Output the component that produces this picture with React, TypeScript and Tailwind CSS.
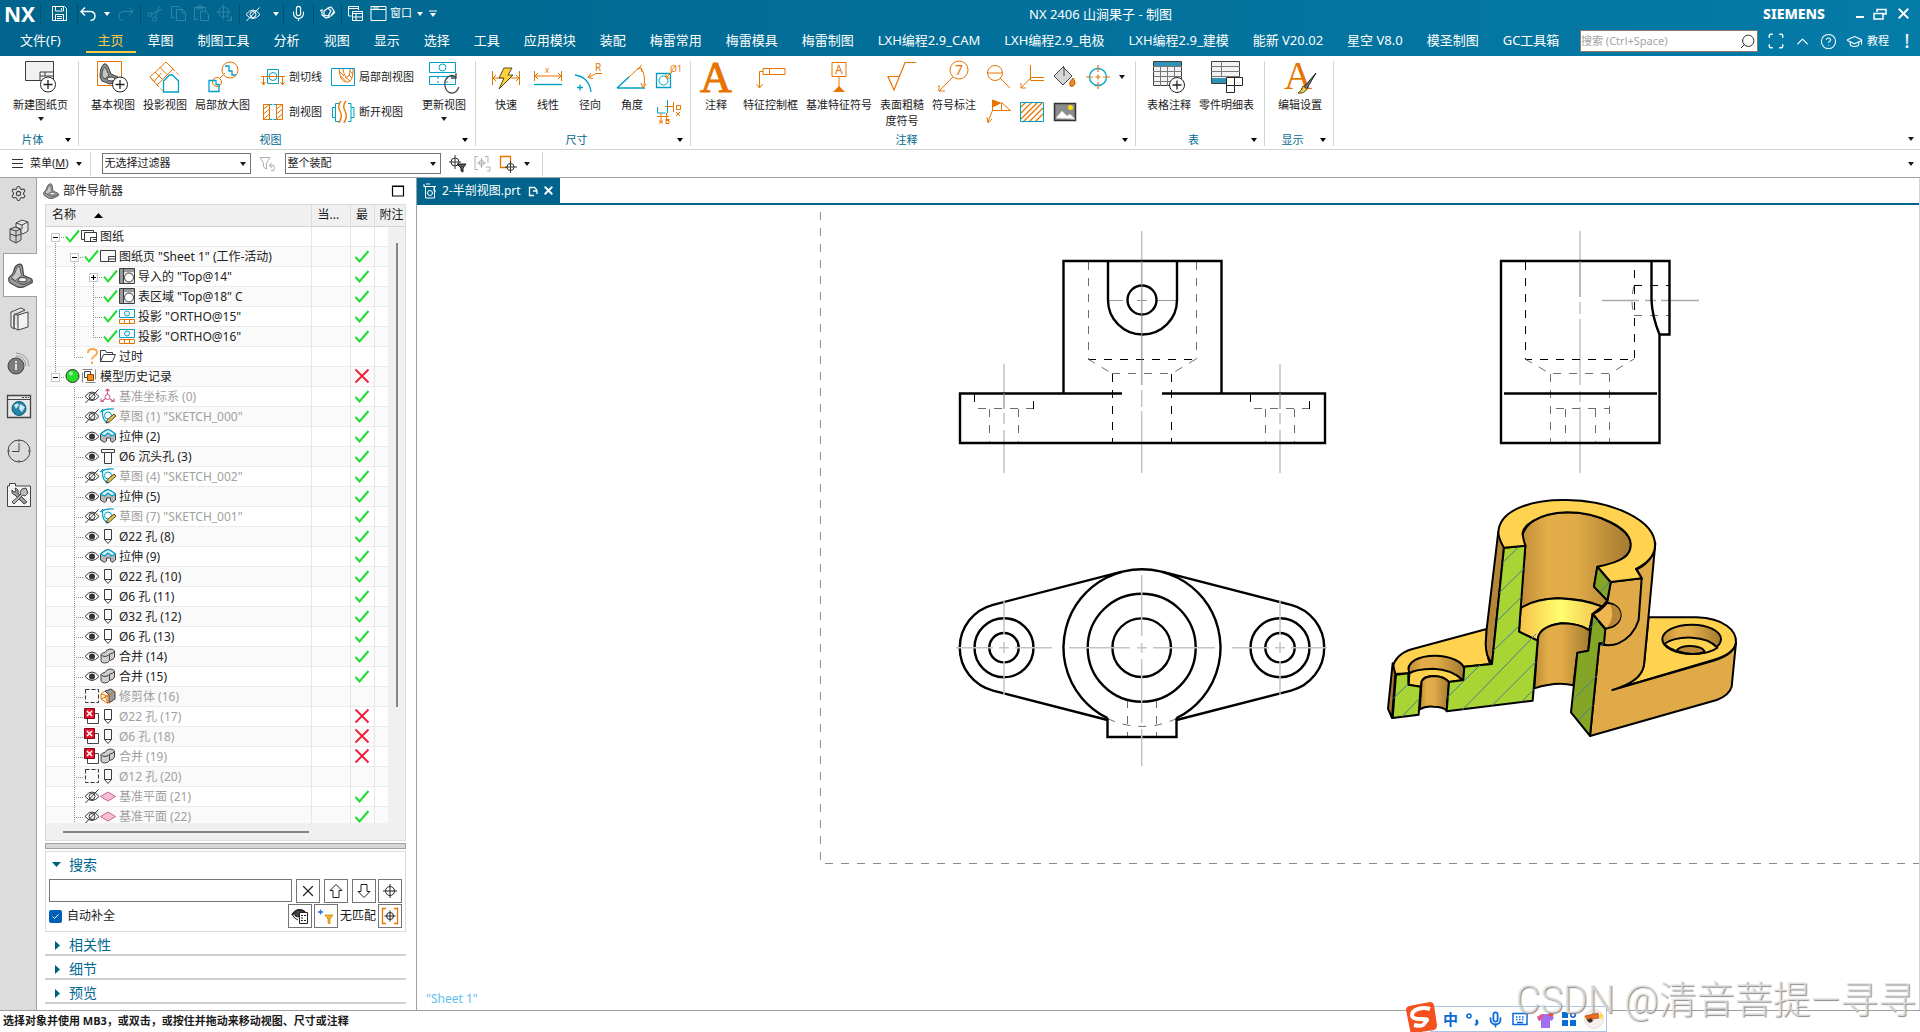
import type { ReactNode } from "react";
import { ChevronUp, CircleHelp, GraduationCap, Mic, Scan, Search, Settings, X } from "lucide-react";

const OR = "#e87400";
const CY = "#00a0c6";
const DK = "#3c3c3c";

function Icon({
  w = 32,
  h = w,
  children,
  className = "",
}: {
  w?: number;
  h?: number;
  children: ReactNode;
  className?: string;
}) {
  return (
    <svg
      width={w}
      height={h}
      viewBox={`0 0 ${w} ${h}`}
      fill="none"
      stroke="currentColor"
      className={`shrink-0 overflow-visible ${className}`}
      aria-hidden
    >
      {children}
    </svg>
  );
}

function Caret({ className = "" }: { className?: string }) {
  return (
    <svg width="6" height="4" viewBox="0 0 6 4" className={`shrink-0 ${className}`} aria-hidden>
      <path d="M0 0h6L3 4z" fill="currentColor" />
    </svg>
  );
}

/* ---------- タイトルバー ---------- */

function Sep() {
  return <span className="h-5 w-px shrink-0 bg-[#004f6e]" />;
}

function TitleBar() {
  return (
    <div className="flex h-[27px] items-center pl-1 pr-2">
      <span className="w-9 text-[21px] font-bold leading-6">NX</span>
      <Sep />
      <button className="ml-[10px] mr-[9px]" aria-label="保存">
        <Icon w={17}>
          <path d="M1.500 1.500h12l2 2v12h-14zM4.500 1.500v4.500h8v-4.500M4.500 15.500v-6h8v6M6 11.500h5M6 13.500h5M10.500 3v2" />
        </Icon>
      </button>
      <Sep />
      <button className="ml-[2px] mr-2" aria-label="撤销">
        <Icon w={16}>
          <path d="M5 1.500L1 5.500l4 4M1 5.500h9q5 0 5 4.500t-4.500 4.500" strokeWidth="1.400" />
        </Icon>
      </button>
      <Caret />
      <button className="ml-2 mr-[6px] text-[#2f86a6]" aria-label="重做">
        <Icon w={16}>
          <path d="M11 1.500l4 4-4 4M15 5.500H6q-5 0-5 4.500t4.500 4.500" />
        </Icon>
      </button>
      <Sep />
      <div className="mx-[6px] flex items-center gap-[6px] text-[#2f86a6]">
        <button aria-label="剪切">
          <Icon w={17}>
            <path d="M15.500 4L5 8.500M12.500 1L8 12" />
            <circle cx="3" cy="9.500" r="2" />
            <circle cx="7.500" cy="14" r="2" />
          </Icon>
        </button>
        <button aria-label="复制">
          <Icon w={17}>
            <path d="M5 12.500H1.500v-11h7l2 2M6.500 4.500h6l3 3v8h-9zM12 4.500v3.500h3.500" />
          </Icon>
        </button>
        <button aria-label="粘贴">
          <Icon w={17}>
            <path d="M5 14.500H1.500v-12h11V6M4.500 1h5v3h-5zM7.500 6.500h5l3 3v6h-8z" />
          </Icon>
        </button>
        <button aria-label="移动">
          <Icon w={17}>
            <circle cx="7.500" cy="7" r="5" />
            <path d="M7.500 0v14M.5 7h14M10 10l5.500 5.500M15.500 11v4.500H11" />
          </Icon>
        </button>
      </div>
      <Sep />
      <button className="ml-[5px] mr-3" aria-label="隐藏">
        <EyeOff />
      </button>
      <Caret />
      <span className="w-1" />
      <Sep />
      <button className="mx-[6px]" aria-label="语音">
        <Mic size={17} strokeWidth={1.6} />
      </button>
      <Sep />
      <button className="mx-[5px]" aria-label="触控">
        <Icon w={17}>
          <path d="M5 6l4-3 3 3-3 5-4-1zM9 3l3-1 3 4-3 5H9M1 6l2-1v5l4 3 4-1M13 10l3-3" strokeWidth="1.200" />
        </Icon>
      </button>
      <Sep />
      <button className="ml-[5px]" aria-label="层叠窗口">
        <Icon w={17}>
          <path d="M4.500 11H1.500V1.500h10V5M1.500 3.500h10M5.500 6.500h10v9h-10zM5.500 8.500h10M9 8.500v7M5.500 12h10" />
        </Icon>
      </button>
      <button className="ml-[6px] flex items-center gap-[3px] text-[11px]">
        <Icon w={17}>
          <path d="M1 1.500h15v14H1zM1 4.500h15M3 3h6" />
        </Icon>
        窗口
        <Caret className="ml-[2px]" />
      </button>
      <Icon w={8} className="ml-[6px]">
        <path d="M0 1h8" />
        <path d="M1 3h6L4 7z" fill="currentColor" stroke="none" />
      </Icon>
      <div className="flex-1 pl-[152px] text-center text-[13px] leading-5">NX 2406 山涧果子 - 制图</div>
      <div className="flex w-[300px] items-center justify-end">
        <span className="mr-[31px] text-sm font-extrabold leading-4">SIEMENS</span>
        <button className="mr-[9px]" aria-label="最小化">
          <Icon w={8}>
            <path d="M0 7h8" strokeWidth="2" />
          </Icon>
        </button>
        <button className="mr-2" aria-label="还原">
          <Icon w={14} h={12}>
            <path d="M4 4V1.500h9V6h-3M1 5.500h9V11H1z" strokeWidth="1.500" />
          </Icon>
        </button>
        <button aria-label="关闭">
          <X size={17} strokeWidth={2.5} />
        </button>
      </div>
    </div>
  );
}

const MENU = [
  "主页", "草图", "制图工具", "分析", "视图", "显示", "选择", "工具", "应用模块", "装配",
  "梅雷常用", "梅雷模具", "梅雷制图", "LXH编程2.9_CAM", "LXH编程2.9_电极", "LXH编程2.9_建模",
  "能新 V20.02", "星空 V8.0", "模圣制图", "GC工具箱",
];

function MenuBar() {
  return (
    <div className="flex h-[29px] items-start">
      <nav className="flex pl-2 text-[13px] leading-[26px]">
        <button className="mr-[13px] h-[26px] px-3">文件(F)</button>
        {MENU.map((m) => (
          <button
            key={m}
            className={
              m === "主页"
                ? "h-[26px] border-b-2 border-[#ffc845] px-3 leading-[26px] text-[#ffc845]"
                : "h-[26px] whitespace-nowrap px-3"
            }
          >
            {m}
          </button>
        ))}
      </nav>
      <div className="ml-auto flex items-center pr-[9px] pt-[3px]">
        <label className="flex h-[22px] w-[178px] items-center border border-[#8a7a6c] bg-white">
          <input
            aria-label="搜索命令"
            placeholder="搜索 (Ctrl+Space)"
            className="w-0 flex-1 text-[11px] text-black outline-none placeholder:text-[#a4a4a4]"
          />
          <Search size={17} strokeWidth={1.4} className="mr-[1px] -scale-x-100 text-[#333]" />
        </label>
        <button className="ml-[9px]" aria-label="全屏">
          <Scan size={18} strokeWidth={1.8} />
        </button>
        <button className="ml-2" aria-label="折叠">
          <ChevronUp size={19} strokeWidth={1.6} />
        </button>
        <button className="ml-2" aria-label="帮助">
          <CircleHelp size={17} strokeWidth={1.5} />
        </button>
        <button className="ml-[9px] flex items-center gap-1 text-[11px]">
          <GraduationCap size={17} strokeWidth={1.5} />
          教程
        </button>
        <span className="ml-[14px] w-2 text-center text-xl leading-5">!</span>
      </div>
    </div>
  );
}

/* ---------- リボン ---------- */

function Big({ label, sub, caret, children }: { label: string; sub?: string; caret?: boolean; children: ReactNode }) {
  return (
    <button className="flex flex-col items-center whitespace-nowrap text-[11px] leading-4">
      {children}
      <span className="mt-1">{label}</span>
      {sub && <span>{sub}</span>}
      {caret && <Caret className="mt-1" />}
    </button>
  );
}

function Small({ label, aria, children }: { label?: string; aria?: string; children: ReactNode }) {
  return (
    <button className="flex h-6 items-center gap-1 whitespace-nowrap text-[11px]" aria-label={aria}>
      {children}
      {label}
    </button>
  );
}

function Group({ name, className = "", children }: { name: string; className?: string; children: ReactNode }) {
  return (
    <section className="mb-[3px] mt-[5px] flex flex-col border-r border-[#d4d4d4]">
      <div className={`flex flex-1 gap-2 ${className}`}>{children}</div>
      <div className="flex items-center pr-[7px] text-[11px] leading-3 text-[#00688f]">
        <span className="flex-1 text-center">{name}</span>
        <Caret className="text-black" />
      </div>
    </section>
  );
}

function Column({ children }: { children: ReactNode }) {
  return <div className="flex flex-col gap-[11px] pt-1">{children}</div>;
}

function Bracket({ s = 24 }: { s?: number }) {
  return (
    <svg width={s} height={s} viewBox="0 0 24 24" className="shrink-0" aria-hidden>
      <path d="M1 14Q5 11 6 6 7 2 11 1q3 0 3 4l1 7 7 3q2 1 1 4l-8 4q-3 1-6 0l-7-4q-2-2-1-5z" fill="#9b9b9b" stroke="#4a4a4a" strokeWidth="1.200" />
      <path d="M3 14q4-3 5-8 1-3 3-3l2 9-6 5z" fill="#c9c9c9" stroke="#4a4a4a" strokeWidth=".8" />
      <path d="M3 15l9 5q3 1 5 0l6-3" fill="none" stroke="#5a5a5a" />
      <ellipse cx="14" cy="16" rx="4" ry="2" fill="#efefef" stroke="#4a4a4a" />
    </svg>
  );
}

function PlusBadge({ x, y }: { x: number; y: number }) {
  return (
    <g stroke="#222">
      <circle cx={x} cy={y} r="7.500" fill="#fff" />
      <path d={`M${x - 4.5} ${y}h9M${x} ${y - 4.5}v9`} strokeWidth="1.300" />
    </g>
  );
}

function Ribbon() {
  return (
    <div className="flex h-[94px] border-b border-[#d4d4d4]">
      <Group name="片体" className="pl-[13px] pr-[10px]">
        <Big label="新建图纸页" caret>
          <Icon>
            <path d="M.5.5h28v19H.5z" fill="#f1f1f1" stroke={DK} />
            <path d="M15 11h13M15 11v8M15 15h13M20 11v4" stroke={DK} />
            <PlusBadge x={23} y={23.5} />
          </Icon>
        </Big>
      </Group>
      <Group name="视图" className="pl-3 pr-[9px]">
        <Big label="基本视图">
          <Icon w={34} h={32}>
            <path d="M1.500.5h24v24h-24z" stroke={OR} />
            <path d="M4 16Q4 6 8 3q3-1 5 5l2 5 7 3q2 2 0 5l-8 2-8-3z" fill="#8c8c8c" stroke="#3d3d3d" />
            <path d="M6 15q0-7 3-9l4 8-4 4z" fill="#c4c4c4" stroke="#555" />
            <ellipse cx="15" cy="18" rx="4" ry="2" fill="#eee" stroke="#3d3d3d" />
            <PlusBadge x={24} y={23.5} />
          </Icon>
        </Big>
        <Big label="投影视图">
          <Icon>
            <path d="M1 16L17 1l7 7L8 24zM6 11l7 7M11 6.500l7 7M4.500 20l-3.500-4M12 12L5 21" stroke={OR} />
            <path d="M24 8l6 6M8 24l6 6" stroke={OR} strokeDasharray="3 2" />
            <path d="M14.500 20l6-6h3l6 6v11h-15z" fill="#fff" stroke={CY} strokeWidth="1.300" />
          </Icon>
        </Big>
        <Big label="局部放大图">
          <Icon>
            <circle cx="23" cy="9" r="8" stroke={OR} />
            <circle cx="10" cy="21" r="4.500" stroke={OR} />
            <path d="M13 17l5-5" stroke={OR} />
            <path d="M18 5h4v5h3v4h4M2 19.500h7v4h3v7H2z" stroke={CY} strokeWidth="1.300" />
          </Icon>
        </Big>
        <div className="flex gap-[9px] pl-[3px]">
          <Column>
            <Small label="剖切线">
              <Icon w={24}>
                <path d="M6.500 4.500h11v14h-11z" stroke={CY} />
                <circle cx="12" cy="11.500" r="4" stroke={CY} />
                <path d="M0 11.500h24M2.500 11.500v8M.5 17l2 3 2-3M21.500 11.500v8M19.500 17l2 3 2-3" stroke={OR} />
              </Icon>
            </Small>
            <Small label="剖视图">
              <Icon w={24}>
                <path d="M2.500 4.500h6v15h-6zM15.500 4.500h6v15h-6zM2.500 9l6-4.500M2.500 14l6-5M2.500 19l6-5M15.500 9l6-4.500M15.500 14l6-5M15.500 19l6-5" stroke={OR} />
                <path d="M8.500 4.500h7M8.500 19.500h7" stroke={CY} strokeDasharray="3 1" />
              </Icon>
            </Small>
          </Column>
          <Column>
            <Small label="局部剖视图">
              <Icon w={24}>
                <path d="M.5 3.500h23v17H.5z" stroke={CY} />
                <path d="M8 4c1 9 3 13 8 13s6-6 6-13M12 4q1 8 4 8t3-8M9 7l4 4M9.500 11l5 5M14 12l5 4M18 10l3 3M19 6l3 3" stroke={OR} />
              </Icon>
            </Small>
            <Small label="断开视图">
              <Icon w={24}>
                <path d="M8 3.500H4.500v18H8M4.500 7.500h-3v10h3M17 3.500h3v18h-3M20 7.500h3v10h-3" stroke={CY} />
                <path d="M10 1q-4 5-1 10t-1 12M15 1q-4 5-1 10t-1 12" stroke={OR} strokeWidth="1.300" />
              </Icon>
            </Small>
          </Column>
        </div>
        <Big label="更新视图" caret>
          <Icon>
            <path d="M1.500 1.500h26v10h-26zM1.500 15.500h26v8h-26z" stroke={CY} />
            <circle cx="14.500" cy="6.500" r="3.500" stroke={CY} />
            <path d="M10 16v8M19 16v8" stroke={CY} strokeDasharray="2 2" />
            <path d="M28 16q-4-3-8 0t-3 9 6 7 8-6" stroke="#444" strokeWidth="1.300" />
            <path d="M28 12v5h-5" stroke="#444" strokeWidth="1.300" />
          </Icon>
        </Big>
      </Group>
      <Group name="尺寸" className="pl-[14px] pr-2">
        <div className="flex gap-[10px]">
          <Big label="快速">
            <Icon>
              <path d="M2.500 10v14M29.500 10v14M3 17h26M6 14l-3 3 3 3M26 14l3 3-3 3" stroke={OR} />
              <path d="M14 7h8l-4 7h5L9 28l5-11H9z" fill="#ffd23c" stroke="#5a4a1a" />
            </Icon>
          </Big>
          <Big label="线性">
            <Icon>
              <path d="M2.500 10v10M29.500 10v10M3 15h26M6 12l-3 3 3 3M26 12l3 3-3 3" stroke={OR} />
              <path d="M2 23.500h28" stroke={CY} strokeWidth="1.400" />
              <text x="13" y="12" fontSize="8" fill={OR} stroke="none">x</text>
            </Icon>
          </Big>
          <Big label="径向">
            <Icon>
              <path d="M1 14q14 2 16 17M3 26.500h6M6 23.500v6" stroke={CY} strokeWidth="1.300" />
              <path d="M28 12.500h-6l-8 4M17 12l-3 4.500 5 1" stroke={OR} />
              <text x="21" y="10" fontSize="10" fill={OR} stroke="none">R</text>
            </Icon>
          </Big>
          <Big label="角度">
            <Icon>
              <path d="M1 27h28M1 27l12-11" stroke={CY} strokeWidth="1.500" />
              <path d="M13 16L26 4M25 7q5 8 3 18M21 8l4-1 1 4M25 22l2 5 3-4" stroke={OR} />
            </Icon>
          </Big>
        </div>
        <Column>
          <Small aria="孔尺寸">
            <Icon w={26} h={24}>
              <path d="M.5 8.500h14v14H.500z" stroke={CY} strokeWidth="1.300" />
              <circle cx="7.500" cy="15.500" r="4.500" stroke={CY} />
              <path d="M10 13l6-6M10 9v4h4" stroke={OR} />
              <text x="14" y="7" fontSize="9" fill={OR} stroke="none">Ø1</text>
            </Icon>
          </Small>
          <Small aria="坐标尺寸">
            <Icon w={26} h={24}>
              <path d="M1.500 7v6M1.500 13h8M11.500 0v13" stroke={CY} />
              <path d="M9 6.500h9M17.500 2v10M1 16.500h12M5 13v8M10.500 13v8M20.500 5.500h4v4h-4zM13.500 19.500h-4" stroke={OR} />
              <path d="M3 20.500l4 3M7 20.500l-4 3M20 12l4 4M24 12l-4 4M10 20.500h3v3h-3z" stroke={OR} />
            </Icon>
          </Small>
        </Column>
      </Group>
      <Group name="注释" className="pl-[9px] pr-[10px]">
        <div className="flex pr-[3px]">
          <Big label="注释">
            <svg width="32" height="32" viewBox="0 0 32 32" className="overflow-visible" aria-hidden>
              <text x="16" y="31" textAnchor="middle" fontSize="44" fill={OR} stroke={OR} className="font-['Liberation_Serif',serif]">A</text>
            </svg>
          </Big>
        </div>
        <Big label="特征控制框">
          <Icon>
            <path d="M8 7.500h22v6H8zM14.500 7.500v6M8 10.500H4.500v16M1.500 23l3 4 3-4" stroke={OR} />
          </Icon>
        </Big>
        <Big label="基准特征符号">
          <Icon>
            <path d="M9 1.500h14v14H9zM16 16v10" stroke={OR} />
            <path d="M16 25l6 6H10z" fill={OR} stroke="none" />
            <text x="12" y="13" fontSize="12" fill={OR} stroke="none">A</text>
          </Icon>
        </Big>
        <Big label="表面粗糙" sub="度符号">
          <Icon>
            <path d="M30 1.500H19L8 29 2 15.500h11" stroke={OR} strokeWidth="1.200" />
          </Icon>
        </Big>
        <Big label="符号标注">
          <Icon>
            <circle cx="21" cy="9" r="9" stroke={OR} />
            <path d="M15 16L1 30M1 24v6h6" stroke={OR} />
            <text x="17" y="14" fontSize="14" fill={OR} stroke="none">7</text>
          </Icon>
        </Big>
        <div className="flex gap-[9px] pl-[3px]">
          <Column>
            <Small aria="目标点">
              <Icon w={24}>
                <circle cx="8" cy="8" r="7.500" stroke={OR} />
                <path d="M.5 8h15M13 13l10 10" stroke={OR} />
              </Icon>
            </Small>
            <Small aria="焊接符号">
              <Icon w={24}>
                <path d="M5.500 0v10.500L1 22M0 17l1 6 4-4M5.500 10.500h18l-9-8v8" stroke={OR} />
                <path d="M5.500 0l8 3-8 4z" fill={OR} stroke={OR} />
              </Icon>
            </Small>
          </Column>
          <Column>
            <Small aria="相交符号">
              <Icon w={24}>
                <path d="M10.500 0v15.500H24M24 12.500H11L1 23M1 18v5h5" stroke={OR} />
              </Icon>
            </Small>
            <Small aria="剖面线">
              <Icon w={24}>
                <path d="M1 7l5-5M1 13L12 2M1 19L18 2M3 22L22 3M9 22L23 8M15 22l8-8" stroke={OR} strokeWidth="1.300" />
                <path d="M.5 2.500h23v19H.5z" stroke={CY} />
              </Icon>
            </Small>
          </Column>
          <Column>
            <Small aria="区域填充">
              <Icon w={24}>
                <path d="M10 2l9 9-9 9-9-9z" fill="#d6d6d6" stroke="#444" />
                <path d="M7 5l4-4M11 2v9" stroke="#444" />
                <path d="M20 13q4 6 0 8t-3-4z" fill="#f28a1c" stroke="#b35c00" />
              </Icon>
            </Small>
            <Small aria="图像">
              <Icon w={24}>
                <path d="M1.500 3.500h21v17h-21z" fill="#8b8b8b" stroke="#333" strokeWidth="1.500" />
                <circle cx="17.500" cy="7.500" r="2.500" fill="#ffe100" stroke="none" />
                <path d="M3 18l6-7 5 5 3-2 5 5z" fill="#fff" stroke="#ccc" />
              </Icon>
            </Small>
          </Column>
          <Column>
            <Small aria="中心标记">
              <Icon w={24}>
                <circle cx="12" cy="12" r="8.500" stroke={CY} strokeWidth="1.300" />
                <path d="M12 0v7M12 17v7M0 12h7M17 12h7M9.500 12h5M12 9.500v5" stroke={OR} strokeWidth="1.200" />
              </Icon>
            </Small>
          </Column>
          <Caret className="mt-[14px]" />
        </div>
      </Group>
      <Group name="表" className="pl-[11px] pr-[10px]">
        <Big label="表格注释">
          <Icon>
            <path d="M.5.5h28v24H.5z" fill="#f2f2f2" stroke={DK} />
            <path d="M1 1h27v4H1z" fill="#2e93b5" stroke="none" />
            <path d="M0 5.500h29M0 10.500h29M0 15.500h29M0 20.500h29M7.500 5v20M14.500 5v20M21.500 5v20" stroke="#777" />
            <PlusBadge x={24} y={24} />
          </Icon>
        </Big>
        <Big label="零件明细表">
          <Icon>
            <path d="M.5.5h28v22H.5z" fill="#f2f2f2" stroke={DK} />
            <path d="M1 17h27v5H1z" fill="#2e93b5" stroke="none" />
            <path d="M0 5.500h29M0 10.500h29M0 15.500h29M10.500 0v15" stroke="#777" />
            <path d="M15.500 16.500h16v8h-8v7h-8zM23.500 16v8M15.500 24.500h8" fill="#fff" stroke="#222" />
          </Icon>
        </Big>
      </Group>
      <Group name="显示" className="pl-[13px] pr-[11px]">
        <Big label="编辑设置">
          <svg width="34" height="32" viewBox="0 0 34 32" className="overflow-visible" aria-hidden>
            <text x="15" y="28" textAnchor="middle" fontSize="39" fill={OR} className="font-['Liberation_Serif',serif]">A</text>
            <path d="M33 12L20 27l3 2z" fill="#777" stroke="#222" />
            <path d="M20 25l4 3q-3 5-9 4 4-2 5-7z" fill="#f1cf4b" stroke="#5a4a1a" />
          </svg>
        </Big>
      </Group>
      <Caret className="mb-2 ml-auto mr-[6px] self-end" />
    </div>
  );
}

/* ---------- 選択バー ---------- */

function Combo({ label, value, className }: { label: string; value: string; className: string }) {
  return (
    <div className={`relative h-[21px] ${className}`}>
      <select aria-label={label} className="h-full w-full appearance-none border border-[#757575] bg-white pl-[2px] text-[11px] outline-none">
        <option>{value}</option>
      </select>
      <Caret className="pointer-events-none absolute right-1 top-[9px] w-2" />
    </div>
  );
}

function SelectionBar() {
  return (
    <div className="flex h-7 items-center border-b border-[#a0a0a0] pr-[6px] text-[11px]">
      <button className="ml-3 flex items-center gap-[7px]">
        <Icon w={11}>
          <path d="M0 1.500h11M0 5.500h11M0 9.500h11" stroke="#333" />
        </Icon>
        <span>
          菜单(<u>M</u>)
        </span>
        <Caret />
      </button>
      <span className="ml-2 mr-[11px] h-6 w-px bg-[#d4d4d4]" />
      <Combo label="选择过滤器" value="无选择过滤器" className="w-[149px]" />
      <button className="ml-2 mr-2 text-[#b0b0b0]" aria-label="重置过滤器">
        <Icon w={18}>
          <path d="M1 2.500h10L7.500 8v6l-3-2V8zM11 10.500h4v5h-3M13 8l-3 2.500 3 2.500" />
        </Icon>
      </button>
      <Combo label="选择范围" value="整个装配" className="w-[156px]" />
      <div className="ml-2 flex items-center gap-[7px]">
        <button aria-label="捕捉过滤">
          <Icon w={18}>
            <circle cx="6" cy="7" r="4" stroke="#333" />
            <path d="M6 0v14M0 7h12" stroke="#333" />
            <path d="M8 9h9l-3 4v4l-2-1v-3z" fill="#555" stroke="#222" />
          </Icon>
        </button>
        <button className="text-[#b0b0b0]" aria-label="重置捕捉">
          <Icon w={18}>
            <path d="M4 1.500H1v13h3M11 1.500h3V8M7.500 3v10M3 8h9M12 12h4v4h-3" />
            <circle cx="7.500" cy="8" r="2.500" />
          </Icon>
        </button>
        <button aria-label="框选">
          <Icon w={18}>
            <path d="M1.500 1.500h10v11h-10z" stroke={OR} strokeWidth="1.300" />
            <circle cx="11.500" cy="12" r="3.500" fill="#fff" stroke="#333" />
            <path d="M11.500 6v12M6 12h12" stroke="#333" />
          </Icon>
        </button>
        <Caret />
      </div>
      <span className="ml-3 h-6 w-px bg-[#d4d4d4]" />
      <Caret className="ml-auto" />
    </div>
  );
}

/* ---------- リソースバー ---------- */

function Rail() {
  const item = "flex h-11 w-full items-center justify-center pl-[2px]";
  return (
    <nav className="flex w-[37px] shrink-0 flex-col border-r border-[#a0a0a0] bg-[#dcdcdc] text-[#444]">
      <button className="flex h-[31px] items-center justify-center" aria-label="设置">
        <Settings size={17} strokeWidth={1.5} />
      </button>
      <button className={item} aria-label="装配导航器">
        <Icon w={20} h={24}>
          <path d="M1 10l5-2 6 2v11l-5 3-6-3z" fill="#cfcfcf" />
          <path d="M7 4l6-3 6 2v9l-5 3-2-1v-4L7 8z" fill="#e4e4e4" />
          <path d="M1 10l6 2 5-2M7 12v12M1 15l6 2 5-2M7 4l6 2 6-3M13 6v4" />
        </Icon>
      </button>
      <button
        className="-mr-px ml-[3px] flex h-11 items-center justify-center self-stretch border border-r-0 border-[#a0a0a0] bg-white"
        aria-label="部件导航器"
      >
        <Bracket s={25} />
      </button>
      <button className={item} aria-label="重用库">
        <Icon w={20} h={24}>
          <path d="M2 5l10-4 4 2M2 5v15l3 2V8M5 8l11-5M9 23V8l10-3v15l-10 3zM5 8v13l4 2M5 7l4 1" fill="#f2f2f2" />
        </Icon>
      </button>
      <button className={item} aria-label="信息">
        <Icon w={24}>
          <circle cx="9" cy="15" r="8" fill="#7b7b7b" />
          <path d="M9 13v6M9 10v2" stroke="#fff" strokeWidth="1.500" />
          <path d="M9 5q9 0 10 10M9 2q12 1 13 13" stroke="#999" />
        </Icon>
      </button>
      <button className={item} aria-label="浏览器">
        <Icon w={24}>
          <path d="M.5.5h23v22H.5z" fill="#e8e8e8" strokeWidth="1.300" />
          <path d="M1 4.500h22M15 2.500h2M18 2.500h2M21 2.500h1" />
          <circle cx="12" cy="13.500" r="7" fill="#2485a8" stroke="#135d78" />
          <path d="M7 10q4-3 5 0l-3 4zM13 9l5 3-3 5-3-3zM9 17l3 2" fill="#cfe9f2" stroke="none" />
        </Icon>
      </button>
      <button className={item} aria-label="历史记录">
        <Icon w={24}>
          <circle cx="12" cy="12" r="11" />
          <path d="M12 4v8.500H5M12 1v2M12 21v2M1 12h2M21 12h2" />
        </Icon>
      </button>
      <button className={item} aria-label="工具">
        <Icon w={24}>
          <path d="M.5 3h2V.5h6V3h15v20.500H.5z" fill="#f4f4f4" />
          <path d="M5 7q-1 4 3 5l9 9 3-2-9-9q1-4-3-5l1 3-2 1z" fill="#999" />
          <path d="M19 5l-4 1-2 3 1 2-9 8 2 2 9-9 2 1 3-3z" fill="#bbb" />
        </Icon>
      </button>
    </nav>
  );
}

/* ---------- 部件ナビゲータ ---------- */

function EyeOff() {
  return (
    <Icon w={16}>
      <path d="M1 8.500q7-9 14 0q-7 8-14 0z" />
      <circle cx="8" cy="8.500" r="3" />
      <path d="M1.500 15L14.500 1.500" />
    </Icon>
  );
}

type Mark = "ok" | "bad" | "none";
type Status = "check" | "ask" | "dot" | "off" | "on" | "dash" | "err";
type Kind =
  | "sheets" | "sheet" | "view" | "ortho" | "folder" | "model" | "csys"
  | "sketch" | "extrude" | "cbore" | "hole" | "unite" | "trim" | "plane";

interface Row {
  // 各階層の罫線: "|"=続く, " "=なし, "+"/"-"=展開ボタン, "t"=枝, "L"=末端
  tree: string;
  status: Status;
  kind: Kind;
  label: string;
  mark: Mark;
  dim?: boolean;
}

const ROWS: Row[] = [
  { tree: "-", status: "check", kind: "sheets", label: "图纸", mark: "none" },
  { tree: "|-", status: "check", kind: "sheet", label: '图纸页 "Sheet 1" (工作-活动)', mark: "ok" },
  { tree: "||+", status: "check", kind: "view", label: '导入的 "Top@14"', mark: "ok" },
  { tree: "||t", status: "check", kind: "view", label: '表区域 "Top@18" C', mark: "ok" },
  { tree: "||t", status: "check", kind: "ortho", label: '投影 "ORTHO@15"', mark: "ok" },
  { tree: "||L", status: "check", kind: "ortho", label: '投影 "ORTHO@16"', mark: "ok" },
  { tree: "|L", status: "ask", kind: "folder", label: "过时", mark: "none" },
  { tree: "_", status: "dot", kind: "model", label: "模型历史记录", mark: "bad" },
  { tree: " t", status: "off", kind: "csys", label: "基准坐标系 (0)", mark: "ok", dim: true },
  { tree: " t", status: "off", kind: "sketch", label: '草图 (1) "SKETCH_000"', mark: "ok", dim: true },
  { tree: " t", status: "on", kind: "extrude", label: "拉伸 (2)", mark: "ok" },
  { tree: " t", status: "on", kind: "cbore", label: "Ø6 沉头孔 (3)", mark: "ok" },
  { tree: " t", status: "off", kind: "sketch", label: '草图 (4) "SKETCH_002"', mark: "ok", dim: true },
  { tree: " t", status: "on", kind: "extrude", label: "拉伸 (5)", mark: "ok" },
  { tree: " t", status: "off", kind: "sketch", label: '草图 (7) "SKETCH_001"', mark: "ok", dim: true },
  { tree: " t", status: "on", kind: "hole", label: "Ø22 孔 (8)", mark: "ok" },
  { tree: " t", status: "on", kind: "extrude", label: "拉伸 (9)", mark: "ok" },
  { tree: " t", status: "on", kind: "hole", label: "Ø22 孔 (10)", mark: "ok" },
  { tree: " t", status: "on", kind: "hole", label: "Ø6 孔 (11)", mark: "ok" },
  { tree: " t", status: "on", kind: "hole", label: "Ø32 孔 (12)", mark: "ok" },
  { tree: " t", status: "on", kind: "hole", label: "Ø6 孔 (13)", mark: "ok" },
  { tree: " t", status: "on", kind: "unite", label: "合并 (14)", mark: "ok" },
  { tree: " t", status: "on", kind: "unite", label: "合并 (15)", mark: "ok" },
  { tree: " t", status: "dash", kind: "trim", label: "修剪体 (16)", mark: "none", dim: true },
  { tree: " t", status: "err", kind: "hole", label: "Ø22 孔 (17)", mark: "bad", dim: true },
  { tree: " t", status: "err", kind: "hole", label: "Ø6 孔 (18)", mark: "bad", dim: true },
  { tree: " t", status: "err", kind: "unite", label: "合并 (19)", mark: "bad", dim: true },
  { tree: " t", status: "dash", kind: "hole", label: "Ø12 孔 (20)", mark: "none", dim: true },
  { tree: " t", status: "off", kind: "plane", label: "基准平面 (21)", mark: "ok", dim: true },
  { tree: " t", status: "off", kind: "plane", label: "基准平面 (22)", mark: "ok", dim: true },
];

function Branch({ c }: { c: string }) {
  const box = c === "-" || c === "+" || c === "_";
  return (
    <svg width="19" height="19" viewBox="0 0 19 19" fill="none" stroke="#909090" className="shrink-0" aria-hidden>
      {(c === "|" || c === "t") && <path d="M9.500 0v19" strokeDasharray="1 1" />}
      {(c === "L" || c === "_") && <path d="M9.500 0v10" strokeDasharray="1 1" />}
      {(c === "-" || c === "+") && <path d="M9.500 10v9" strokeDasharray="1 1" />}
      {c !== "|" && c !== " " && <path d="M9 10.500h10" strokeDasharray="1 1" />}
      {box && <path d="M5.500 6.500h8v8h-8z" fill="#fff" stroke="#c4c4c4" />}
      {box && <path d={c === "+" ? "M7 10.500h5M9.500 8v5" : "M7 10.500h5"} stroke="#000" />}
    </svg>
  );
}

function StatusIcon({ s }: { s: Status }) {
  if (s === "off") return <span className="text-[#333]"><EyeOff /></span>;
  return (
    <Icon w={16}>
      {s === "check" && <path d="M1 8.500l4 5L14 2.500" stroke="#1fdc2f" strokeWidth="2" />}
      {s === "ask" && <path d="M4 5q0-4 4.500-4T13 4.500q0 2-2.500 3.500T8 11.500M8 13.500v2.500" stroke="#f9a94b" strokeWidth="2" />}
      {s === "dot" && <circle cx="7.500" cy="8" r="6.500" fill="#27dd2c" stroke="#333" />}
      {s === "dot" && <circle cx="6" cy="5.500" r="2" fill="#a6f7a4" stroke="none" />}
      {s === "on" && <path d="M1 8.500q7-9 14 0q-7 8-14 0z" stroke="#333" />}
      {s === "on" && <circle cx="8" cy="8.500" r="3" fill="#333" stroke="none" />}
      {s === "dash" && <path d="M1.500 1.500h13v13h-13z" stroke="#333" strokeDasharray="4 2" />}
      {s === "err" && <path d="M3.500 5.500h11v10h-11z" stroke="#444" fill="#fff" />}
      {s === "err" && <path d="M.5.5h10v10H.5z" fill="#e0142d" stroke="#8c0015" />}
      {s === "err" && <path d="M3 3l5 5M8 3L3 8" stroke="#fff" strokeWidth="1.600" />}
    </Icon>
  );
}

function KindIcon({ k }: { k: Kind }) {
  switch (k) {
    case "sheets":
      return <Icon w={16}><path d="M3 11.500H.5v-9h12v2M3.500 4.500h12v9h-12zM9.500 9.500h6M9.500 9.500v4M12 11.500h3.500" stroke={DK} /></Icon>;
    case "sheet":
      return <Icon w={16}><path d="M.5 2.500h15v11H.5zM8.500 8.500h7M8.500 8.500v5M8.500 11h7" stroke={DK} /></Icon>;
    case "view":
      return (
        <Icon w={16}>
          <path d="M.5.5h15v15H.5z" fill="#e6e6e6" stroke={DK} />
          <path d="M1 1h3v14H1zM4 1h11v3H4z" fill="#999" stroke="none" />
          <path d="M4.500 1v14" stroke={DK} />
          <circle cx="10" cy="9.500" r="4.500" fill="#fff" stroke={DK} />
        </Icon>
      );
    case "ortho":
      return (
        <Icon w={16}>
          <path d="M.5 1.500h15v8H.5z" stroke={CY} />
          <circle cx="8" cy="5.500" r="2.500" stroke={CY} />
          <path d="M.5 11.500h15v4H.5zM5.500 11.500v4M10.500 11.500v4" stroke={OR} />
        </Icon>
      );
    case "folder":
      return <Icon w={16}><path d="M.5 13.500v-11h5l1 2h6v2M.5 13.500l3-7h12l-3 7z" stroke={DK} /></Icon>;
    case "model":
      return (
        <Icon w={16}>
          <path d="M1.500 1.500h13v13h-13z" stroke="#888" strokeDasharray="10 3" />
          <path d="M3.500 3.500h6v6h-6z" stroke="#444" />
          <path d="M6.500 6.500h6v6h-6z" fill="#f58c1e" stroke="#8a4a00" />
        </Icon>
      );
    case "csys":
      return (
        <Icon w={16}>
          <path d="M7.500 1v6M5.500 10.500l-4 3M9.500 10.500l4 3M1 10.500v3h3M11 13.500h3v-3M5.500 3l2-2 2 2" stroke="#cf5f8f" strokeWidth="1.200" />
          <circle cx="7.500" cy="9" r="2.500" stroke="#cf5f8f" />
        </Icon>
      );
    case "sketch":
      return (
        <Icon w={16}>
          <path d="M2.500 1v4q0 8 6 10M0 4q6-4 14-3" stroke={CY} strokeWidth="1.200" />
          <circle cx="8" cy="7.500" r="3.500" stroke={CY} />
          <path d="M6 15l1.500-3.500L14 6l2 2-6.500 6z" fill="#e8c24a" stroke="#222" strokeWidth=".8" />
        </Icon>
      );
    case "extrude":
      return (
        <Icon w={16}>
          <path d="M.5 6v6l4 2.500 2-1.500v-3h4v3l1.500 1.500 3.500-2.500V6l-4-3-4-1.500L4 3z" fill="#b8b8b8" stroke="#444" />
          <path d="M.5 6L4 3.500 8 1.500l4 2L15.500 6 12 8 8 5 4.500 8z" fill="#dff3f8" stroke={CY} strokeWidth="1.200" />
        </Icon>
      );
    case "cbore":
      return <Icon w={16}><path d="M1.500 1.500h13v3h-3v11h-7v-11h-3zM4.500 4.500h7" stroke={DK} /></Icon>;
    case "hole":
      return <Icon w={16}><path d="M4.500 1.500h7v10l-3.500 4-3.500-4zM4.500 11.500h7" stroke={DK} /></Icon>;
    case "unite":
      return (
        <Icon w={16}>
          <path d="M1 6.500q1-2 4-2 1-3 5-3.500 4 0 4.500 2v6q-1 3-5 3.500-1 2.500-5 2.500-3 0-3.500-2z" fill="#cfcfcf" stroke="#444" />
          <path d="M1 6.500q1 2 4 2 4-.500 4.500-2.500 4 0 5-3M9.500 6.500v6" stroke="#444" />
        </Icon>
      );
    case "trim":
      return (
        <Icon w={16}>
          <path d="M5 3l6-2 4 3v7l-6 4V7z" fill="#9b9b9b" stroke="#444" />
          <path d="M1 6l7 2 6-4M1 6l4-3M1 6v5l7 4.500V8M8 15l-3-7M1 11l7-3" stroke={OR} />
        </Icon>
      );
    case "plane":
      return <Icon w={16}><path d="M.5 8.500L8 4l7.500 4.500L8 13z" fill="#f6bfd4" stroke="#cf5f8f" /></Icon>;
  }
}

function MarkIcon({ m }: { m: Mark }) {
  if (m === "none") return null;
  return (
    <Icon w={16} className="mx-auto">
      {m === "ok" ? (
        <path d="M1.500 9l4 4.500L14.500 3" stroke="#1fdc2f" strokeWidth="2" />
      ) : (
        <path d="M1.500 1.500l13 13M14.500 1.500l-13 13" stroke="#ee1c35" strokeWidth="1.800" />
      )}
    </Icon>
  );
}

function PartTree() {
  return (
    <div className="flex min-h-0 flex-1 flex-col border border-[#dcdcdc] bg-[#f0f0f0]">
      <div className="relative min-h-0 flex-1 overflow-hidden">
        <table className="w-full table-fixed border-collapse text-left text-xs">
          <thead>
            <tr className="h-[21px] border-b border-[#d4d4d4] bg-[#f0f0f0]">
              <th className="border-r border-[#dcdcdc] pl-[6px] font-normal">
                <span className="flex items-center gap-[18px] leading-5">
                  名称
                  <svg width="9" height="5" viewBox="0 0 9 5" aria-hidden>
                    <path d="M0 5h9L4.500 0z" />
                  </svg>
                </span>
              </th>
              <th className="w-[39px] border-r border-[#dcdcdc] pl-[6px] font-normal leading-5">当...</th>
              <th className="w-6 border-r border-[#dcdcdc] text-center font-normal leading-5">最</th>
              <th className="w-[31px] whitespace-nowrap pl-[5px] font-normal leading-5">附注</th>
            </tr>
          </thead>
          <tbody>
            {ROWS.map((r, i) => (
              <tr
                key={r.label}
                className={`h-5 border-b border-[#ebebeb] ${i % 2 ? "bg-[#fafafa]" : "bg-white"} ${
                  r.dim ? "text-[#a0a0a0]" : "text-[#222]"
                }`}
              >
                <td className="border-r border-[#e6e6e6] p-0">
                  <div className="flex h-[19px] items-center whitespace-nowrap">
                    {r.tree.split("").map((c, n) => (
                      <Branch key={n} c={c} />
                    ))}
                    <StatusIcon s={r.status} />
                    <KindIcon k={r.kind} />
                    <span className="ml-[3px] leading-[19px]">{r.label}</span>
                  </div>
                </td>
                <td className="border-r border-[#e6e6e6] p-0" />
                <td className="border-r border-[#e6e6e6] p-0">
                  <MarkIcon m={r.mark} />
                </td>
                <td className="p-0" />
              </tr>
            ))}
          </tbody>
        </table>
        {/* 縦スクロールバー */}
        <div className="absolute bottom-0 right-0 top-[22px] flex w-[17px] justify-center bg-[#f0f0f0] pt-4">
          <span className="h-4/5 w-[2px] bg-[#858585]" />
        </div>
      </div>
      <div className="flex h-[17px] items-center pl-[17px]">
        <span className="h-[2px] w-[246px] bg-[#858585]" />
      </div>
    </div>
  );
}

function SquareBtn({ aria, children }: { aria: string; children: ReactNode }) {
  return (
    <button aria-label={aria} className="flex size-6 shrink-0 items-center justify-center border border-[#757575] bg-white text-[#222]">
      {children}
    </button>
  );
}

function SearchBox() {
  return (
    <section className="mt-[2px] border border-[#dcdcdc] pb-[3px] pl-[3px] pr-[3px]">
      <button className="mb-[2px] flex h-[25px] items-center gap-[8px] pl-[3px] text-sm text-[#00688f]">
        <svg width="9" height="5" viewBox="0 0 9 5" aria-hidden>
          <path d="M0 0h9L4.500 5z" fill="#006080" />
        </svg>
        搜索
      </button>
      <div className="flex items-start">
        <input aria-label="搜索" className="mr-1 h-[23px] w-0 flex-1 border border-[#757575] px-1 text-xs" />
        <div className="flex gap-1">
          <SquareBtn aria="清除">
            <X size={18} strokeWidth={1.6} />
          </SquareBtn>
          <SquareBtn aria="上一个">
            <Icon w={14}>
              <path d="M7 .5l6 6h-3v7H4v-7H1z" />
            </Icon>
          </SquareBtn>
          <SquareBtn aria="下一个">
            <Icon w={14}>
              <path d="M7 13.500l6-6h-3v-7H4v7H1z" />
            </Icon>
          </SquareBtn>
        </div>
        <span className="w-[2px]" />
        <SquareBtn aria="定位">
          <Icon w={14}>
            <circle cx="7" cy="7" r="4.500" />
            <path d="M7 0v14M0 7h14" />
          </Icon>
        </SquareBtn>
      </div>
      <div className="mt-px flex items-center text-xs">
        <label className="flex flex-1 items-center gap-[5px]">
          <input type="checkbox" defaultChecked className="peer sr-only" />
          <span className="flex size-[13px] items-center justify-center rounded-[2px] bg-[#005fb8]">
            <Icon w={9}>
              <path d="M1.500 4.500l2 2 4-4" stroke="#fff" />
            </Icon>
          </span>
          自动补全
        </label>
        <SquareBtn aria="显示选项">
          <Icon w={18}>
            <path d="M1 8q6-8 13-3" strokeWidth="2" />
            <circle cx="7" cy="6.500" r="3.500" fill="#444" />
            <path d="M1 7q2 5 6 6" />
            <path d="M8.500 5.500h8v11h-8zM10 8.500h2M10 11h2M10 13.500h2M13 8.500h2M13 13.500h2" fill="#fff" />
          </Icon>
        </SquareBtn>
        <span className="w-[2px]" />
        <SquareBtn aria="添加过滤">
          <Icon w={18}>
            <path d="M1 5h5M3.500 2.500v5" stroke="#1c6fe0" strokeWidth="1.300" />
            <path d="M8 8h8l-3 4v5l-2-1v-4z" fill="#f5b321" stroke="#c98200" strokeWidth=".7" />
          </Icon>
        </SquareBtn>
        <span className="mx-[2px] leading-4">无匹配</span>
        <SquareBtn aria="匹配定位">
          <Icon w={18}>
            <path d="M5 1.500H1.500v15H5M13 1.500h3.500v15H13" stroke={OR} strokeWidth="1.300" />
            <circle cx="9" cy="9" r="3.500" />
            <path d="M9 3.500v11M3.500 9h11" />
          </Icon>
        </SquareBtn>
      </div>
    </section>
  );
}

function PartNavigator() {
  return (
    <aside className="flex w-[380px] shrink-0 flex-col border-r border-[#a0a0a0] pb-[6px] pl-2 pr-[10px]">
      <div className="-ml-[2px] flex h-[26px] shrink-0 items-center gap-1 pr-[2px] text-xs">
        <Bracket s={16} />
        部件导航器
        <button className="ml-auto" aria-label="浮动窗口">
          <Icon w={12}>
            <path d="M.5 1h11v10H.5zM0 1.500h12" stroke="#000" strokeWidth="1.200" />
          </Icon>
        </button>
      </div>
      <PartTree />
      <div className="mt-[2px] h-[6px] shrink-0 border border-[#a0a0a0] bg-[#d6d6d6]" />
      <SearchBox />
      {["相关性", "细节", "预览"].map((t) => (
        <button key={t} className="flex h-6 shrink-0 items-center gap-[9px] border-b-2 border-[#d0d0d0] pl-[10px] pt-1 text-sm leading-5 text-[#00688f]">
          <svg width="5" height="9" viewBox="0 0 5 9" aria-hidden>
            <path d="M0 0v9l5-4.500z" fill="#006080" />
          </svg>
          {t}
        </button>
      ))}
    </aside>
  );
}

/* ---------- 図面 ---------- */

const HATCH =
  "M398 248l49-48M388 338l76-74M380 424l75-74M370 512l75-72M232 652l98-97M277 690L498 462M365 678L498 545M455 665l37-37M70 655l45-43M96 710l52-55M690 335l30-30M660 445l25-27M610 658l70-70M625 720l43-44M690 500l13-13";

function IsoPart() {
  return (
    <g transform="translate(1370 480) scale(.33333)" stroke="#000" strokeWidth="6" strokeLinejoin="round">
      <defs>
        <linearGradient id="bore">
          <stop offset="0" stopColor="#c08c36" />
          <stop offset=".25" stopColor="#e3ad4a" />
          <stop offset=".5" stopColor="#e0aa48" />
          <stop offset="1" stopColor="#a37a30" />
        </linearGradient>
        <linearGradient id="cone">
          <stop offset="0" stopColor="#f6c04a" />
          <stop offset=".5" stopColor="#ffff6e" />
          <stop offset="1" stopColor="#f2bd4a" />
        </linearGradient>
      </defs>
      {/* 左フランジ */}
      <path d="M75 582L68 562Q78 522 125 508L350 447V500Q352 540 362 552L283 560 118 580z" fill="#ffd350" />
      <path d="M76 582L68 550 54 686 66 714z" fill="#a87b33" />
      <path d="M118 580C104 545 150 527 195 527C240 527 276 545 283 565L280 602 237 605 118 612z" fill="url(#bore)" />
      <path d="M118 580Q135 567 190 566Q245 568 278 600L237 606Q220 588 190 588Q160 588 155 605L152 620 116 615z" fill="#ffd350" />
      <path d="M155 603Q165 589 192 588Q225 590 237 607L230 692Q220 680 190 680Q165 678 149 688z" fill="url(#bore)" />
      <path d="M78 584l37-4v34l37 6-6 84-78 10z" fill="#a8d434" />
      {/* 円筒 */}
      <path d="M385 155L402 203 366 550Q347 530 347 490L350 447z" fill="#b58538" />
      <path d="M466 197Q453 175 460 158C475 115 540 96 600 97C690 98 783 150 783 195C783 230 740 252 682 262L672 320 712 362 697 380Q640 356 565 355Q490 358 450 388z" fill="url(#bore)" />
      <path d="M452 385Q490 358 565 355Q640 358 697 380L668 402 658 450Q620 430 575 430Q515 435 503 482L447 455z" fill="url(#cone)" />
      <path d="M503 482Q503 440 575 430Q630 430 660 452L655 512 622 520 610 616Q560 603 493 625z" fill="url(#bore)" />
      <path d="M402 203l64-6-19 258 56 27-15 180-258 32 7-88 43-6 3-40 83-8z" fill="#a8d434" />
      {/* 右側面とフランジ */}
      <path d="M836 412L980 412C1060 415 1102 450 1098 490Q1092 520 1030 540L727 630Q810 600 822 555z" fill="#ffd350" />
      <path
        d="M722 306L815 295 800 268Q850 245 856 190L822 555Q815 605 727 630L1030 542Q1092 525 1098 488L1085 620Q1078 645 1040 660L660 768 688 492 706 448 668 402 697 380 712 365z"
        fill="#e0aa48"
      />
      <path d="M385 160C385 92 480 58 590 60C730 62 860 122 855 200Q852 240 798 267L815 295 722 306 682 260C760 245 785 225 782 190C778 145 690 97 590 97C500 100 455 140 458 165Q462 185 466 197L402 203Q388 180 385 160z" fill="#ffd350" />
      <path d="M815 295L806 420Q790 470 745 490Q720 500 690 492" fill="none" />
      <path d="M712 368Q752 375 752 408Q748 440 706 446L668 402Q690 395 712 368z" fill="#eeb550" />
      <path d="M720 372Q752 378 752 408Q748 436 712 442Q738 410 720 372z" fill="#b98638" stroke="none" />
      <path d="M682 260l40 48-10 54-40-42z" fill="#84a526" />
      <path d="M668 402l38 46-4 42h-14l-28 278-57-71 19-179 33-6z" fill="#84a526" />
      <ellipse cx="965" cy="478" rx="88" ry="44" fill="url(#bore)" />
      <path d="M882 492C925 464 1010 466 1042 503C1010 528 920 528 882 492z" fill="#ffd350" />
      <path d="M920 513C925 492 1000 492 1004 517Q960 528 920 513z" fill="#bd8a39" />
      <path d={HATCH} fill="none" stroke="#4a7a9a" strokeWidth="3" />
    </g>
  );
}

function Drawing() {
  return (
    <svg
      viewBox="417 205 1502 805"
      preserveAspectRatio="xMinYMin meet"
      className="h-full w-full"
      fill="none"
      role="img"
      aria-label="Sheet 1"
    >
      {/* 図枠 */}
      <path d="M820.500 212V863.500H1919" stroke="#8c8c8c" strokeDasharray="8 8" />

      {/* 中心線 */}
      <g stroke="#c4c4c4" strokeWidth="1.500">
        <path d="M1141.700 231V385M1141.700 390V407M1141.700 411V473" />
        <path d="M1004 364V409M1004 413V424M1004 430V473M1280 364V409M1280 413V424M1280 430V473" />
        <path d="M1108 300.500H1123M1137 300.500H1147M1157 300.500H1177" stroke="#999" strokeWidth="1" />
        <path d="M1580 231V297M1580 302V314M1580 319V385M1580 391V402M1580 407V473" />
        <path d="M1602 300.500H1639M1645 300.500H1656M1661 300.500H1699" stroke="#aaa" />
      </g>

      {/* 隠れ線 */}
      <g stroke="#6e6e6e" strokeDasharray="8 8">
        <path d="M1088.500 262V359M1196.500 262V359" />
        <path d="M1088 359.500H1196M1112.500 374V443M1171.500 374V443" stroke="#000" />
        <path d="M1088 359l24 14.500M1196 359l-24 14.500M1112 373.500H1171" />
        <path d="M978 408.500H1034M989.500 409V443M1018.500 409V443M1254 408.500H1310M1265.500 409V443M1294.500 409V443" />
        <path d="M1525.500 262V359.500H1634.500V262M1634 285.500H1669" stroke="#000" />
        <path d="M1525 359l25 14.500H1610l24-14.500M1550.500 374V443M1609.500 374V443M1634 315.500H1669" />
        <path d="M1556 408.500H1610M1565.500 409V443M1595.500 409V443M1634 286q-4 14 0 29" />
        <path d="M1127.500 700V736M1156.500 700V736M1107.500 718.500a78.500 78.500 0 0 0 69 0" />
      </g>
      <path d="M974.500 394v8M1033.500 401v8M1250.500 394v8M1309.500 401v8" stroke="#000" />

      {/* 正面図・側面図・平面図 */}
      <g stroke="#000" strokeWidth="2.400">
        <path d="M1063.500 393.500V261H1221.500V393.500M1122 393.500H960V443H1325V393.500H1162" />
        <path d="M1108 261V300A34.500 34.500 0 0 0 1177 300V261" />
        <circle cx="1142" cy="300" r="14.500" />
        <path d="M1501 261H1669.500V334.500H1659.500V443H1501zM1651.500 261V300Q1652 316 1659.500 334.500M1504 393.500H1657" />
        <path d="M1107.500 718.200A78.500 78.500 0 1 1 1176.500 718.200M1107.500 718V737H1176.500V718" />
        <circle cx="1141.700" cy="647.700" r="54" />
        <circle cx="1141.700" cy="647.700" r="29.300" />
        <circle cx="1004" cy="647.700" r="29.500" />
        <circle cx="1004" cy="647.700" r="14.700" />
        <circle cx="1280" cy="647.700" r="29.500" />
        <circle cx="1280" cy="647.700" r="14.700" />
        <path d="M1122 571.600L993 604.800A44.300 44.300 0 0 0 993 690.600L1107.500 720" />
        <path d="M1162 571.600L1291 604.800A44.300 44.300 0 0 1 1291 690.600L1176.500 720" />
      </g>
      <g stroke="#c4c4c4" strokeWidth="1.500">
        <path d="M1141.700 575V636M1141.700 643V653M1141.700 659V723M1141.700 729V766" />
        <path d="M956 647.700H993M999 647.700H1009M1015 647.700H1052M1069 647.700H1130M1137 647.700H1147M1153 647.700H1215M1232 647.700H1269M1275 647.700H1285M1291 647.700H1327" />
        <path d="M1004 600V635M1004 642V653M1004 661V695M1280 600V635M1280 642V653M1280 661V695" />
        <path d="M1141.700 261V385M1004 393V409M1280 393V409M1580 261V297" stroke="#a0a0a0" strokeOpacity=".6" />
      </g>

      <IsoPart />

      <text x="426" y="1003" fontSize="12" fill="#5cc1ee">
        "Sheet 1"
      </text>
    </svg>
  );
}

function Canvas() {
  return (
    <main className="flex min-w-0 flex-1 flex-col border-r border-[#d4d4d4]">
      <div className="flex h-[27px] shrink-0 border-b-2 border-[#00648c]">
        <div className="flex items-center bg-[#00648c] pl-1 pr-[5px] text-xs text-white">
          <Icon w={18} className="mr-[3px]">
            <path d="M3 4.500h12M4.500 5v11h9V5M5 2h4M3 2v3M13 5v4h2" />
            <circle cx="9" cy="11" r="2.500" />
          </Icon>
          2-半剖视图.prt
          <Icon w={10} className="ml-[7px]">
            <path d="M6 9.500H1.500v-8h5l2 2V6M5 5h4v3" strokeWidth="1.300" />
          </Icon>
          <button className="ml-1" aria-label="关闭标签">
            <X size={13} strokeWidth={3.5} />
          </button>
        </div>
      </div>
      <div className="min-h-0 flex-1">
        <Drawing />
      </div>
    </main>
  );
}

/* ---------- 入力メソッドバーと透かし ---------- */

function ImeBar() {
  return (
    <div className="absolute bottom-0 right-[313px] flex h-[26px] w-[177px] items-center justify-between border border-[#a9c6e8] bg-white pl-3 pr-[2px] text-[#0a6bd6]">
      <svg width="32" height="32" viewBox="0 0 32 32" className="absolute -left-[26px] -top-[6px]" aria-hidden>
        <path d="M4 5L25 1q3 0 4 3l3 20q0 4-3 5L9 32q-4 0-4-3L1 9q0-3 3-4z" fill="#f4511e" />
        <path d="M25 8q-6-2-12 0t-6 6 8 4 7 1-3 4-10 1" fill="none" stroke="#fff" strokeWidth="4" />
      </svg>
      <span className="text-[15px] font-bold leading-5">中</span>
      <Icon w={13} h={14}>
        <circle cx="3" cy="4" r="2" strokeWidth="1.500" />
        <path d="M10 8q3 3-1 5" strokeWidth="2.500" />
      </Icon>
      <Mic size={17} strokeWidth={2.5} />
      <Icon w={16}>
        <path d="M1 2.500h14v11H1zM4 6h1.500M7 6h1.500M10 6h1.500M4 8.500h1.500M7 8.500h1.500M10 8.500h1.500M5 11.500h6" strokeWidth="1.500" />
      </Icon>
      <Icon w={17}>
        <path d="M5 3h7l5 3-2 4-2-1v8H4V9L2 10 0 6z" fill="#a070f0" stroke="none" />
        <path d="M5 3l-5 3 2 4 2-1 3-6z" fill="#e8538a" stroke="none" />
        <circle cx="14" cy="3" r="2.500" fill="#ee4b35" stroke="none" />
      </Icon>
      <Icon w={14}>
        <path d="M0 0h6v6H0zM0 8h6v6H0zM8 8h6v6H8z" fill="currentColor" stroke="none" />
        <circle cx="11" cy="3" r="2.200" strokeWidth="1.600" />
      </Icon>
      <Icon w={20}>
        <circle cx="10" cy="10" r="9.500" fill="#f6efee" stroke="#e8dcdc" />
        <path d="M1 7l13-3 1 5-12 2z" fill="#ef6c1a" stroke="#9c3d00" strokeWidth=".6" />
        <path d="M3 11q5-4 6 1-4 4-6-1z" fill="#333" stroke="none" />
        <path d="M17 3l1 3 2 1-2 1-1 3-1-3-2-1 2-1z" fill="#ffd83a" stroke="none" />
      </Icon>
    </div>
  );
}

export default function App() {
  return (
    <div className="relative flex h-screen min-w-[1600px] flex-col overflow-hidden bg-white font-['Noto_Sans','Noto_Sans_CJK_SC',sans-serif] text-[#1a1a1a]">
      <header className="bg-linear-to-r from-[#00648c] to-[#057ba8] text-white">
        <TitleBar />
        <MenuBar />
      </header>
      <Ribbon />
      <SelectionBar />
      <div className="flex min-h-0 flex-1">
        <Rail />
        <PartNavigator />
        <Canvas />
      </div>
      <footer className="h-[22px] shrink-0 border-t border-[#a0a0a0] pl-[3px] text-[11px] font-bold leading-5">
        选择对象并使用 MB3，或双击，或按住并拖动来移动视图、尺寸或注释
      </footer>
      <ImeBar />
      <div className="pointer-events-none absolute bottom-[6px] right-1 whitespace-nowrap font-['Roboto','Noto_Sans_CJK_SC',sans-serif] text-[38px] font-light leading-[52px] text-[#e4e4e4]/80 [text-shadow:1px_1px_1px_#8c8c8c]">
        CSDN @清音菩提—寻寻
      </div>
    </div>
  );
}
